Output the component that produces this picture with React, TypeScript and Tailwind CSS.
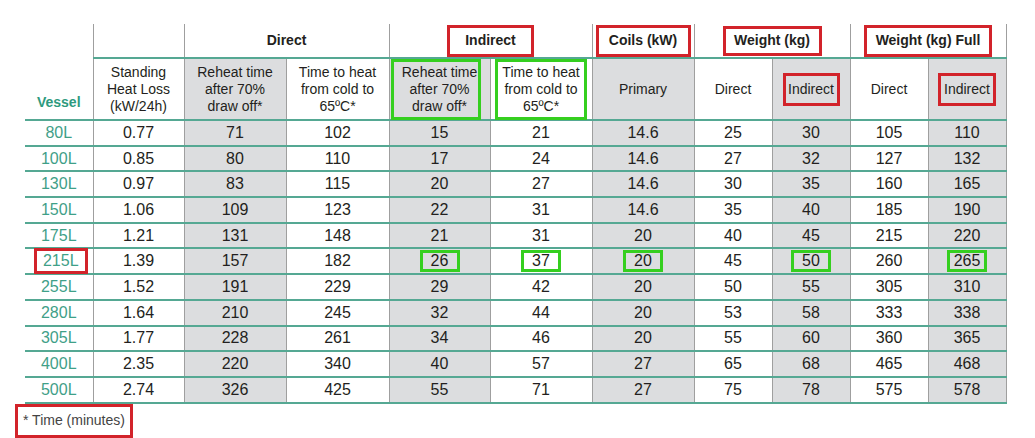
const rows = [
  ["80L", "0.77", "71", "102", "15", "21", "14.6", "25", "30", "105", "110"],
  ["100L", "0.85", "80", "110", "17", "24", "14.6", "27", "32", "127", "132"],
  ["130L", "0.97", "83", "115", "20", "27", "14.6", "30", "35", "160", "165"],
  ["150L", "1.06", "109", "123", "22", "31", "14.6", "35", "40", "185", "190"],
  ["175L", "1.21", "131", "148", "21", "31", "20", "40", "45", "215", "220"],
  ["215L", "1.39", "157", "182", "26", "37", "20", "45", "50", "260", "265"],
  ["255L", "1.52", "191", "229", "29", "42", "20", "50", "55", "305", "310"],
  ["280L", "1.64", "210", "245", "32", "44", "20", "53", "58", "333", "338"],
  ["305L", "1.77", "228", "261", "34", "46", "20", "55", "60", "360", "365"],
  ["400L", "2.35", "220", "340", "40", "57", "27", "65", "68", "465", "468"],
  ["500L", "2.74", "326", "425", "55", "71", "27", "75", "78", "575", "578"],
];

const widths = [68, 91, 102, 103, 101, 102, 102, 78, 78, 78, 78];
const shaded = [2, 4, 6, 8, 10];
// cells in the 215L row that carry a green marker
const marked = [4, 5, 6, 8, 10];

const cellBase =
  "border-l border-l-[#9f9f9f] border-b-2 border-b-[#55a893] text-center align-middle p-0";

function RedBox({ children, className = "" }: { children: React.ReactNode; className?: string }) {
  return (
    <span
      className={`inline-flex items-center justify-center border-[3px] border-[#d2232a] ${className}`}
    >
      {children}
    </span>
  );
}

function GreenBox({ children }: { children: React.ReactNode }) {
  return (
    <span className="inline-flex items-center justify-center w-[40px] h-[22px] -my-[2px] border-[3px] border-[#35cf1f] leading-none">
      {children}
    </span>
  );
}

export default function App() {
  return (
    <div className="w-[1035px] h-[438px] bg-white font-['Liberation_Sans',Arial,sans-serif] text-[#231f20] pt-[24px] pl-[25px]">
      <table className="border-collapse table-fixed">
        <colgroup>
          {widths.map((w, i) => (
            <col key={i} style={{ width: w }} />
          ))}
        </colgroup>
        <thead>
          <tr className="h-[34px] text-[14px] font-bold">
            <th className="p-0" />
            <th className={cellBase} />
            <th colSpan={2} className={cellBase}>
              Direct
            </th>
            <th colSpan={2} className={cellBase}>
              <RedBox className="h-[32px] px-[15px]">Indirect</RedBox>
            </th>
            <th className={cellBase}>
              <RedBox className="h-[32px] w-[95px]">Coils (kW)</RedBox>
            </th>
            <th colSpan={2} className={cellBase}>
              <RedBox className="h-[30px] w-[99px]">Weight (kg)</RedBox>
            </th>
            <th colSpan={2} className={`${cellBase} border-r border-r-[#9f9f9f]`}>
              <RedBox className="h-[32px] w-[128px]">Weight (kg) Full</RedBox>
            </th>
          </tr>
          <tr className="h-[62px] text-[14px] font-normal leading-[17px]">
            <th className="p-0 pb-[8px] align-bottom border-b-2 border-b-[#55a893] text-center text-[#2e9a7e] font-bold text-[14px]">
              Vessel
            </th>
            <th className={cellBase + " font-normal"}>
              Standing
              <br />
              Heat Loss
              <br />
              (kW/24h)
            </th>
            <th className={cellBase + " font-normal bg-[#dcdddf]"}>
              Reheat time
              <br />
              after 70%
              <br />
              draw off*
            </th>
            <th className={cellBase + " font-normal"}>
              Time to heat
              <br />
              from cold to
              <br />
              65ºC*
            </th>
            <th className={cellBase + " font-normal bg-[#dcdddf] relative"}>
              Reheat time
              <br />
              after 70%
              <br />
              draw off*
              <span className="absolute left-[1px] top-0 w-[90px] h-[61px] border-[3px] border-[#35cf1f] pointer-events-none" />
            </th>
            <th className={cellBase + " font-normal relative"}>
              Time to heat
              <br />
              from cold to
              <br />
              65ºC*
              <span className="absolute left-[4px] top-0 w-[92px] h-[61px] border-[3px] border-[#35cf1f] pointer-events-none" />
            </th>
            <th className={cellBase + " font-normal bg-[#dcdddf]"}>Primary</th>
            <th className={cellBase + " font-normal"}>Direct</th>
            <th className={cellBase + " font-normal bg-[#dcdddf]"}>
              <RedBox className="h-[33px] w-[57px]">Indirect</RedBox>
            </th>
            <th className={cellBase + " font-normal"}>Direct</th>
            <th className={cellBase + " font-normal bg-[#dcdddf] border-r border-r-[#9f9f9f]"}>
              <RedBox className="h-[33px] w-[58px]">Indirect</RedBox>
            </th>
          </tr>
        </thead>
        <tbody className="text-[16px] leading-none">
          {rows.map((r, ri) => {
            const hl = r[0] === "215L";
            return (
              <tr key={ri} className="h-[25.7px]">
                {r.map((v, ci) => {
                  if (ci === 0) {
                    return (
                      <td
                        key={ci}
                        className="p-0 text-center align-middle border-b-2 border-b-[#55a893] text-[#3fa088]"
                      >
                        {hl ? (
                          <RedBox className="h-[26px] w-[54px] -my-[2px] ml-[4px]">{v}</RedBox>
                        ) : (
                          v
                        )}
                      </td>
                    );
                  }
                  const bg = shaded.includes(ci) ? " bg-[#dcdddf]" : "";
                  const last = ci === 10 ? " border-r border-r-[#9f9f9f]" : "";
                  return (
                    <td key={ci} className={cellBase + bg + last}>
                      {hl && marked.includes(ci) ? <GreenBox>{v}</GreenBox> : v}
                    </td>
                  );
                })}
              </tr>
            );
          })}
        </tbody>
      </table>
      <div className="-ml-[10px]">
        <RedBox className="h-[34px] w-[118px] text-[14px] text-[#444]">* Time (minutes)</RedBox>
      </div>
    </div>
  );
}
